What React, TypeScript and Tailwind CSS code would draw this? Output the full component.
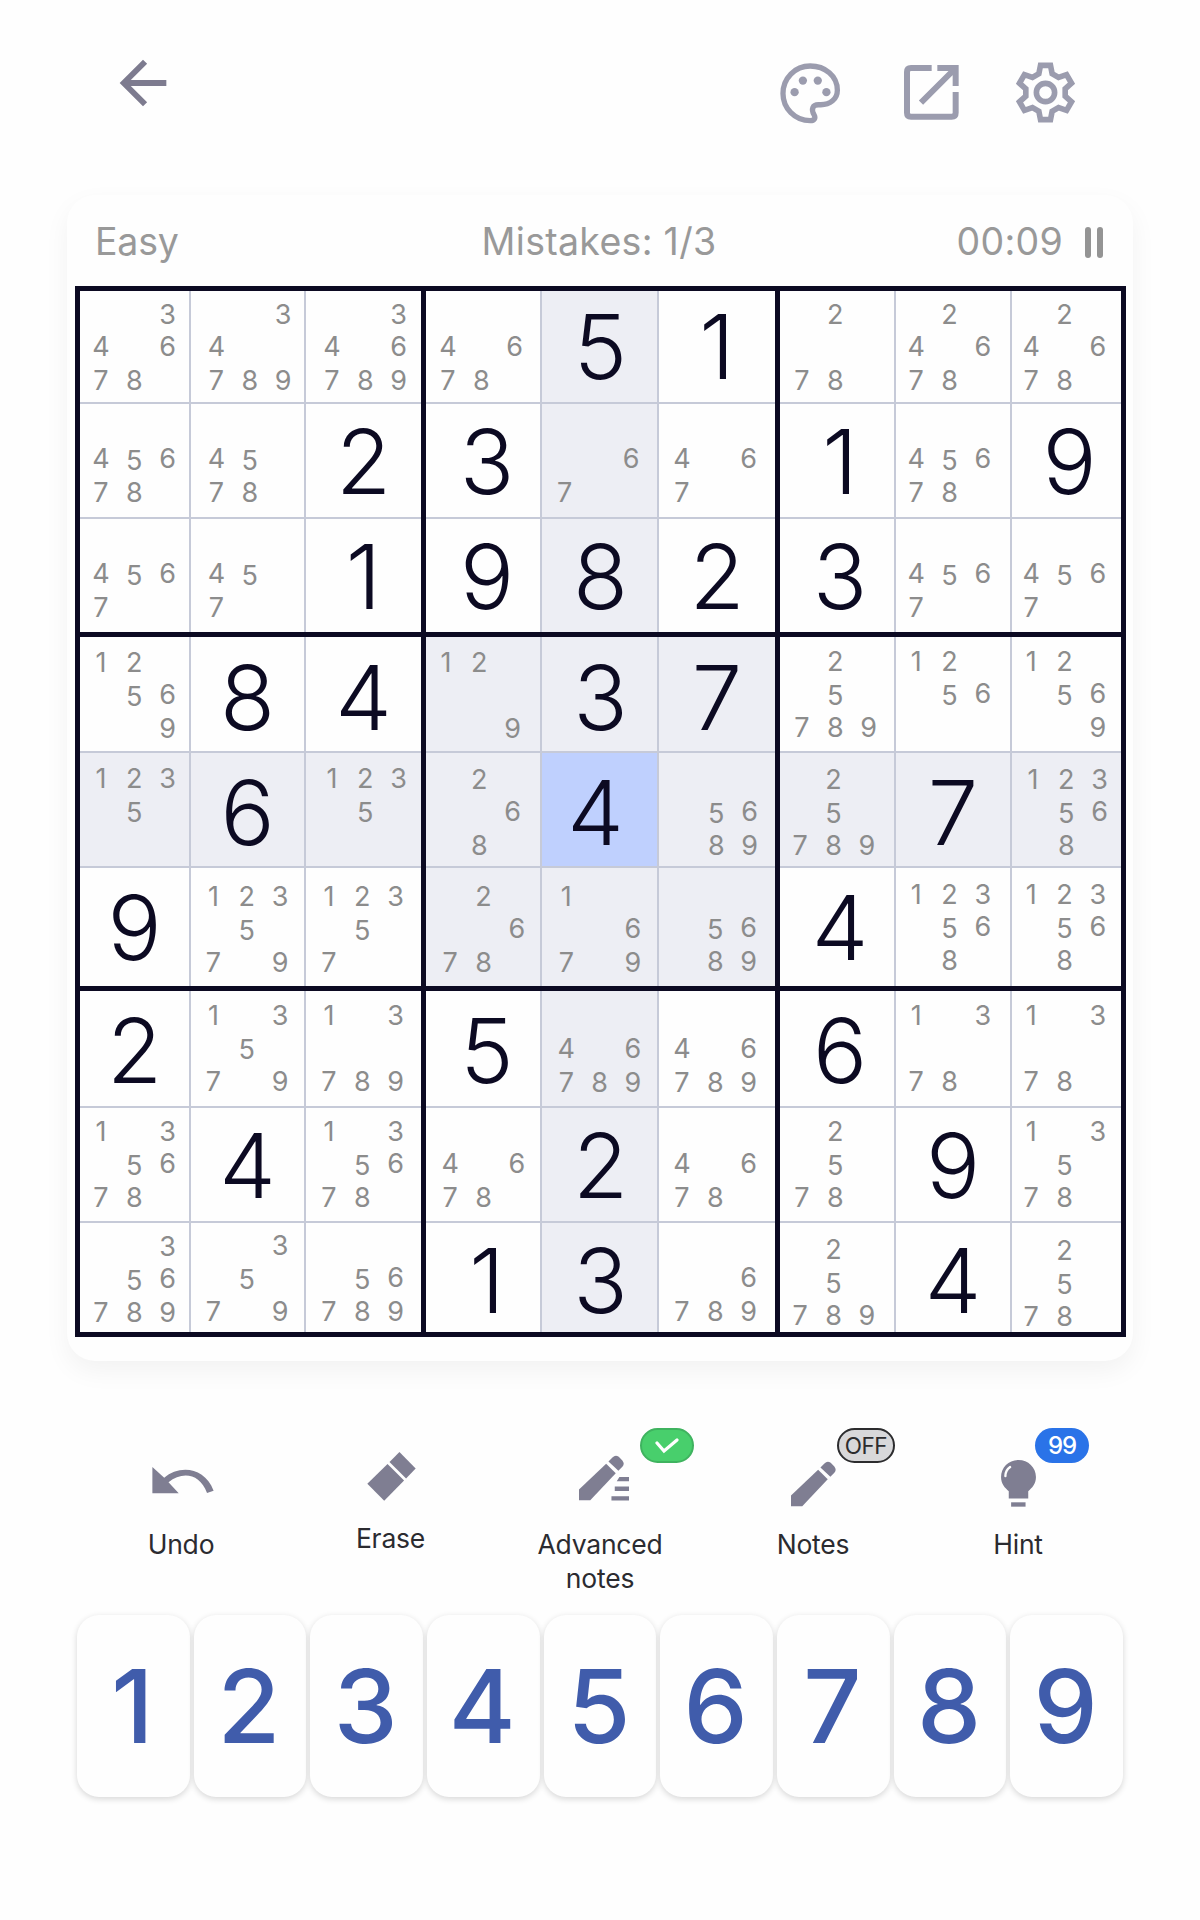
import { ReactNode } from "react";
import clsx from "clsx";
import { MdArrowBack } from "react-icons/md";

// "G" marks a placed digit, everything else is the pencil marks of the cell
const board: string[][] = [
  ["34678", "34789", "346789", "4678", "G5", "G1", "278", "24678", "24678"],
  ["45678", "4578", "G2", "G3", "67", "467", "G1", "45678", "G9"],
  ["4567", "457", "G1", "G9", "G8", "G2", "G3", "4567", "4567"],
  ["12569", "G8", "G4", "129", "G3", "G7", "25789", "1256", "12569"],
  ["1235", "G6", "1235", "268", "G4", "5689", "25789", "G7", "123568"],
  ["G9", "123579", "12357", "2678", "1679", "5689", "G4", "123568", "123568"],
  ["G2", "13579", "13789", "G5", "46789", "46789", "G6", "1378", "1378"],
  ["135678", "G4", "135678", "4678", "G2", "4678", "2578", "G9", "13578"],
  ["356789", "3579", "56789", "G1", "G3", "6789", "25789", "G4", "2578"],
];

const selected = { row: 4, col: 4 };

// Inset of the pencil marks for each column / row
const notesLeft = [4.3, 8.8, 9.3, 5.3, 6, 6.3, 5.3, 3.6, 2.6];
const notesTop = [6.8, 6, 6, 8.7, 9.3, 11.3, 7.8, 6.5, 5.5];
const digitLeft = [0, 0, 0, 4, 1, 0, 3, 0, 3];
const digitTop = [0, 0.5, 1, 3.5, 3, 1, 2, 1, 3];

const notesNudge: Record<string, [number, number]> = {
  "3-3": [-2, 0],
  "3-6": [0, -1],
  "3-7": [0, -1],
  "3-8": [0, -1],
  "4-3": [-2, 1],
  "4-5": [1, 1],
  "4-6": [-1.7, 1],
  "4-8": [1.7, 1],
  "5-1": [-3, 0.5],
  "5-2": [-3, 0.5],
  "5-3": [2.3, 0.5],
  "5-4": [1.7, 0.5],
  "5-7": [0, -1],
  "5-8": [0, -1],
  "6-1": [-3, 0],
  "6-2": [-3, 0],
  "6-4": [1.7, 1.2],
  "6-5": [0, 1.2],
  "7-2": [-3, 0],
  "7-3": [2.3, 0.7],
  "7-6": [0, 0.7],
  "8-0": [0, 1.5],
  "8-1": [-3, 0],
  "8-2": [-3, 0],
  "8-6": [-1.7, 4],
  "8-8": [0, 5.5],
};

const boxCols = [
  "grid-cols-[109px_113px_115px]",
  "grid-cols-[114px_115px_116px]",
  "grid-cols-[114px_114px_109px]",
];
const boxRows = [
  "grid-rows-[111px_113px_113px]",
  "grid-rows-[114px_113px_118px]",
  "grid-rows-[115px_113px_109px]",
];

const three = [0, 1, 2];

function PaletteIcon() {
  return (
    <svg viewBox="90 66 182 184" className="w-[61px] h-[61px]" fill="none">
      <path
        d="M180 75C134 75 98 112 98 158C98 203 134 240 180 240C193 240 197 232 192 223C182 205 187 192 205 192L212 192C240 192 262 175 262 148C262 105 225 75 180 75Z"
        stroke="#9b9cae"
        strokeWidth="16"
      />
      <g fill="#9b9cae">
        <circle cx="158" cy="119" r="12.5" />
        <circle cx="203" cy="119" r="12.5" />
        <circle cx="133" cy="154" r="12.5" />
        <circle cx="229" cy="154" r="12.5" />
      </g>
    </svg>
  );
}

function OpenIcon() {
  return (
    <svg
      viewBox="462 72 165 165"
      className="w-[55px] h-[55px]"
      fill="none"
      stroke="#9b9cae"
      strokeWidth="18"
    >
      <path d="M545 81H483Q471 81 471 93V215Q471 227 483 227H605Q617 227 617 215V153" />
      <path d="M562 81H617V135M513 185L617 81" />
    </svg>
  );
}

function GearIcon() {
  return (
    <svg
      viewBox="-92 -92 184 184"
      className="w-[61px] h-[61px]"
      fill="none"
      stroke="#9b9cae"
      strokeWidth="17"
    >
      <path d="M-15 -82L15 -82L20 -57L39.4 -45.8L63.5 -54L78.5 -28L59.4 -11.2L59.4 11.2L78.5 28L63.5 54L39.4 45.8L20 57L15 82L-15 82L-20 57L-39.4 45.8L-63.5 54L-78.5 28L-59.4 11.2L-59.4 -11.2L-78.5 -28L-63.5 -54L-39.4 -45.8L-20 -57Z" />
      <circle r="27.5" />
    </svg>
  );
}

function UndoIcon() {
  return (
    <svg viewBox="96 202 186 82" className="w-[62px] h-[27px]" fill="#7f7e92">
      <path d="M96 202L132 235C176 196 254 200 282 274L262 281C240 220 186 215 145 248L176 282H96Z" />
    </svg>
  );
}

function EraseIcon() {
  return (
    <svg viewBox="741 154 146 148" className="w-[49px] h-[49px]" fill="#7f7e92">
      <path d="M802 190L852 240L792 301L741 250Z" />
      <path d="M838 154L887 204L858 234L808 184Z" />
    </svg>
  );
}

function PencilIcon({ lines }: { lines?: boolean }) {
  return (
    <svg
      viewBox={lines ? "0 0 151 138" : "0 0 136 138"}
      className={lines ? "w-[50px] h-[46px]" : "w-[45px] h-[46px]"}
      fill="#7f7e92"
    >
      <path d="M82 26L111 55L34 136H0V104Z" />
      <path d="M89 19L101 7Q110 -2 120 5L131 16Q139 26 131 35L119 47Z" />
      {lines && (
        <path d="M122 66H151V79H114ZM108 95H151V108H108ZM98 124H151V137H98Z" />
      )}
    </svg>
  );
}

function BulbIcon() {
  return (
    <svg viewBox="0 0 104 140" className="w-[35px] h-[47px]" fill="#7f7e92">
      <path d="M52 0C81 0 104 22 104 51C104 72 92 84 81 93V115H23V93C12 84 0 72 0 51C0 22 23 0 52 0Z" />
      <path d="M30 126H73V139H30Z" />
      <path
        d="M13 48C13 36 18 27 27 21"
        stroke="#fefefe"
        strokeWidth="7"
        strokeLinecap="round"
        fill="none"
      />
    </svg>
  );
}

function Cell({ row, col }: { row: number; col: number }) {
  const value = board[row][col];
  const isSelected = row === selected.row && col === selected.col;
  const sameBox =
    Math.floor(row / 3) === Math.floor(selected.row / 3) &&
    Math.floor(col / 3) === Math.floor(selected.col / 3);
  const related = row === selected.row || col === selected.col || sameBox;
  const bg = isSelected
    ? "bg-[#bfd0fe]"
    : related
    ? "bg-[#edeef4]"
    : "bg-[#fefefe]";

  if (value.startsWith("G")) {
    const left = isSelected ? -4 : digitLeft[col];
    return (
      <div className={clsx("flex items-center justify-center", bg)}>
        <span
          className="text-[90px] leading-none font-light text-[#0c0a22]"
          style={{ transform: `translate(${left}px, ${digitTop[row]}px)` }}
        >
          {value[1]}
        </span>
      </div>
    );
  }

  const [dx, dy] = notesNudge[`${row}-${col}`] ?? [0, 0];
  return (
    <div
      className={clsx("overflow-hidden", bg)}
      style={{ paddingLeft: notesLeft[col] + dx, paddingTop: notesTop[row] + dy }}
    >
      <div className="grid grid-cols-[33.3px_33.3px_33.3px] grid-rows-[33px_33px_33px] text-[27px] leading-[33px] text-center text-[#8c8c8c]">
        {"123456789".split("").map((n) => (
          <span
            key={n}
            className={clsx(n === "5" && "pt-[1px]", (n === "4" || n === "6") && "-mt-[1px]")}
          >
            {value.includes(n) ? n : ""}
          </span>
        ))}
      </div>
    </div>
  );
}

function Tool({
  label,
  icon,
  badge,
  className,
}: {
  label: string;
  icon: ReactNode;
  badge?: ReactNode;
  className?: string;
}) {
  return (
    <div className={clsx("relative flex flex-col items-center", className)}>
      <div className="h-[46px] flex items-end">{icon}</div>
      <p className="mt-[20px] w-[140px] text-center text-[26.5px] leading-[34px] tracking-[-0.2px] text-[#2b2b30]">
        {label}
      </p>
      {badge}
    </div>
  );
}

function App() {
  return (
    <div className="w-[1200px] h-[1920px] bg-[#fefefe] font-['Inter',sans-serif] overflow-hidden">
      {/* Top bar */}
      <header className="h-[195px] flex items-start pl-[108px] pr-[124px]">
        <MdArrowBack className="mt-[48px] w-[70px] h-[70px] text-[#7d7b8f]" />
        <div className="ml-auto mt-[61px] flex items-center">
          <div className="pt-[2px]">
            <PaletteIcon />
          </div>
          <div className="ml-[63px]">
            <OpenIcon />
          </div>
          <div className="ml-[56px]">
            <GearIcon />
          </div>
        </div>
      </header>

      {/* Board card */}
      <main className="mx-[67px] h-[1166px] rounded-[28px] bg-[#fefefe] shadow-[0_10px_26px_rgba(0,0,0,0.05)] px-[8px]">
        <div className="h-[91px] grid grid-cols-3 items-center pl-[20px] pr-[22px] pt-[3px] text-[37.5px] text-[#999999]">
          <span className="tracking-[-0.2px]">Easy</span>
          <span className="text-center tracking-[0.3px]">Mistakes: 1/3</span>
          <span className="flex items-center justify-end tracking-[0.3px]">
            00:09
            <span className="ml-[22px] flex gap-[6px]">
              <i className="w-[6px] h-[31px] rounded-full bg-[#949494]" />
              <i className="w-[6px] h-[31px] rounded-full bg-[#949494]" />
            </span>
          </span>
        </div>
        <div className="grid w-[1051px] grid-cols-[341px_349px_341px] grid-rows-[341px_349px_341px] gap-[5px] p-[5px] bg-[#0c0a22]">
          {three.map((br) =>
            three.map((bc) => (
              <div
                key={`${br}${bc}`}
                className={clsx("grid gap-[2px] bg-[#c6cad8]", boxCols[bc], boxRows[br])}
              >
                {three.map((r) =>
                  three.map((c) => (
                    <Cell key={`${r}${c}`} row={br * 3 + r} col={bc * 3 + c} />
                  ))
                )}
              </div>
            ))
          )}
        </div>
      </main>

      {/* Tools */}
      <section className="mt-[94px] ml-[76px] h-[160px] grid grid-cols-[210px_209px_210px_216px_194px]">
        <Tool
          label="Undo"
          className="pt-[6px]"
          icon={
            <div className="pb-[13px] pl-[4px]">
              <UndoIcon />
            </div>
          }
        />
        <Tool
          label="Erase"
          icon={
            <div className="pl-[2px]">
              <EraseIcon />
            </div>
          }
        />
        <Tool
          label="Advanced notes"
          className="pt-[6px]"
          icon={
            <div className="pl-[8px] pb-[6px]">
              <PencilIcon lines />
            </div>
          }
          badge={
            <div className="absolute left-[145px] top-[-27px] w-[54px] h-[35px] rounded-full border-2 border-[#3fb35f] bg-[#48cf6c] flex items-center justify-center">
              <svg viewBox="0 0 24 16" className="w-[24px] h-[16px]" fill="none">
                <path d="M2 5L9 13L22 2" stroke="#fff" strokeWidth="3.2" strokeLinecap="round" />
              </svg>
            </div>
          }
        />
        <Tool
          label="Notes"
          className="pt-[6px]"
          icon={<PencilIcon />}
          badge={
            <div className="absolute left-[132px] top-[-27px] w-[58px] h-[35px] rounded-full border-2 border-[#2c2c2e] bg-[#d8d8da] flex items-center justify-center text-[22.5px] tracking-[-0.5px] text-[#2c2c2e]">
              OFF
            </div>
          }
        />
        <Tool
          label="Hint"
          className="pt-[6px]"
          icon={<BulbIcon />}
          badge={
            <div className="absolute left-[114px] top-[-27px] w-[54px] h-[35px] rounded-full bg-[#2a73e8] flex items-center justify-center text-[24px] tracking-[-1px] font-medium text-white">
              99
            </div>
          }
        />
      </section>

      {/* Number pad */}
      <section className="ml-[77px] w-[1046px] h-[182px] grid grid-cols-9 gap-[4px]">
        {"123456789".split("").map((n) => (
          <button
            key={n}
            className="pr-[2px] rounded-[22px] bg-[#fefefe] shadow-[0_2px_6px_rgba(0,0,0,0.16)] text-[102px] leading-none font-[450] text-[#405cab]"
          >
            {n}
          </button>
        ))}
      </section>
    </div>
  );
}

export default App;
